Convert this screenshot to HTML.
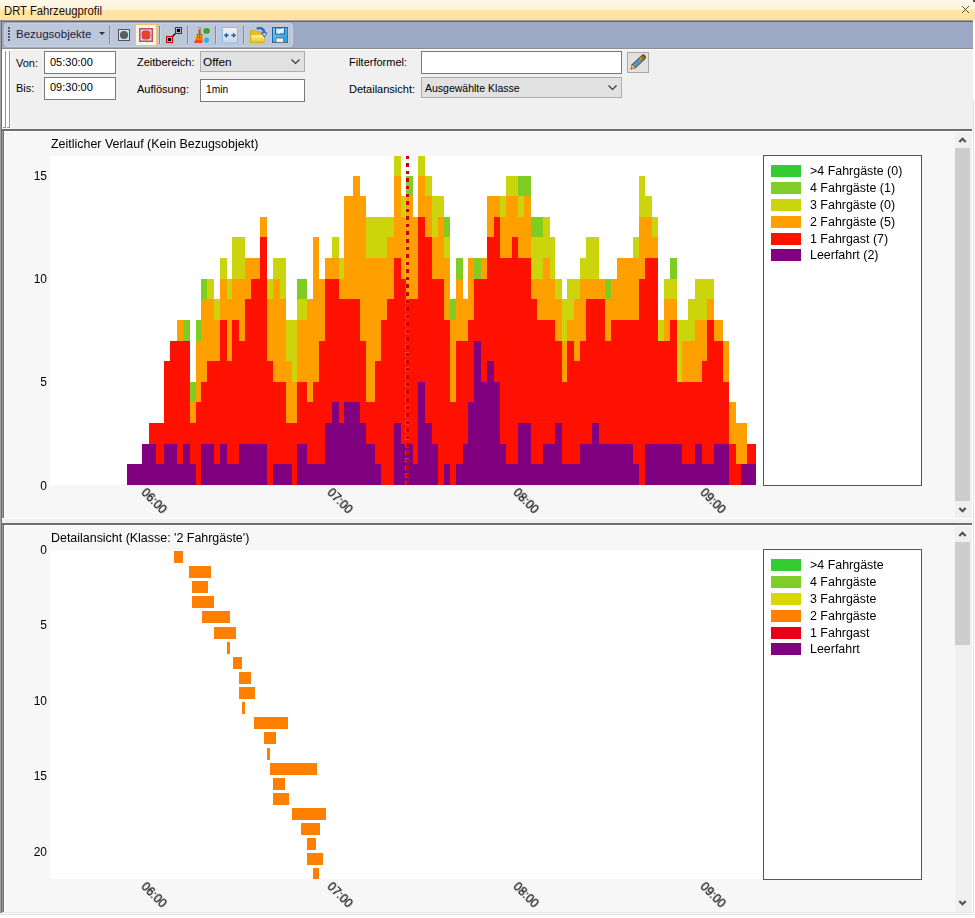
<!DOCTYPE html>
<html><head><meta charset="utf-8">
<style>
*{margin:0;padding:0;box-sizing:border-box}
html,body{width:975px;height:918px;overflow:hidden;background:#fff;font-family:"Liberation Sans",sans-serif;}
.a{position:absolute}
.t{position:absolute;white-space:nowrap;line-height:1}
#title{left:0;top:0;width:975px;height:20px;background:linear-gradient(#FFF9EA 0px,#FEF1D4 10px,#FFE6A2 10px,#FFE39C 20px)}
.lbl{position:absolute;white-space:nowrap;line-height:1;font-size:11px;color:#000}
.box{position:absolute;background:#fff;border:1px solid #7A7A7A}
.dd{position:absolute;background:#E1E1E1;border:1px solid #ADADAD}
.sep{position:absolute;top:26px;width:1px;height:18px;background:#7F8CA8;box-shadow:1px 0 0 #C9D2E2}
.ct{position:absolute;white-space:nowrap;line-height:1;font-size:12.45px;color:#000;will-change:transform}
.yl{position:absolute;white-space:nowrap;line-height:1;font-size:12px;color:#000;text-align:right;width:30px;will-change:transform}
.xl{position:absolute;white-space:nowrap;line-height:1;font-size:12px;color:#000;transform:rotate(45deg);transform-origin:center center;will-change:transform;-webkit-text-stroke:0.2px #000}
.lg{position:absolute;white-space:nowrap;line-height:1;font-size:12.45px;color:#000;will-change:transform}
</style></head><body>
<!-- title bar -->
<div id="title" class="a"></div>
<div class="t" style="left:4px;top:4.6px;font-size:12px;color:#1a0a0a;transform:scaleX(0.94);transform-origin:0 0">DRT Fahrzeugprofil</div>
<svg class="a" style="left:961px;top:5px" width="10" height="9" viewBox="0 0 10 9"><path d="M1 1L8 8M8 1L1 8" stroke="#4A3C22" stroke-width="0.9"/></svg>
<div class="a" style="left:973px;top:0;width:2px;height:2px;background:#555"></div>
<!-- dark line -->
<div class="a" style="left:0;top:20px;width:973px;height:1px;background:#A29C88"></div>
<div class="a" style="left:0;top:21px;width:973px;height:1px;background:#666666"></div>
<!-- toolbar strip -->
<div class="a" style="left:2px;top:22px;width:971px;height:26px;background:#9BA9C4"></div>
<div class="a" style="left:4px;top:23px;width:289px;height:24px;background:#BCC7D9;border:1px solid #C8D1E1;border-radius:3px"></div>
<div class="a" style="left:2px;top:48px;width:971px;height:1px;background:#8D8D8D"></div>
<div class="a" style="left:2px;top:49px;width:971px;height:1px;background:#FFFFFF"></div>
<!-- grip dots -->
<svg class="a" style="left:7px;top:26px" width="4" height="16"><rect x="1" y="1" width="2" height="2" fill="#4F5B73"/><rect x="1" y="4" width="2" height="2" fill="#4F5B73"/><rect x="1" y="7" width="2" height="2" fill="#4F5B73"/><rect x="1" y="10" width="2" height="2" fill="#4F5B73"/><rect x="1" y="13" width="2" height="2" fill="#4F5B73"/></svg>
<div class="t" style="left:16px;top:29px;font-size:11.5px;color:#1C1C44">Bezugsobjekte</div>
<svg class="a" style="left:99px;top:32px" width="6" height="4"><path d="M0 0H6L3 3Z" fill="#2A3350"/></svg>
<div class="sep" style="left:109px"></div>
<div class="sep" style="left:159px"></div>
<div class="sep" style="left:187px"></div>
<div class="sep" style="left:215px"></div>
<div class="sep" style="left:243px"></div>
<!-- icon 1: square with grey circle -->
<svg class="a" style="left:118px;top:29px" width="12" height="12"><rect x="0.5" y="0.5" width="11" height="11" fill="#BDE8F6" stroke="#555"/><circle cx="6" cy="6" r="4.1" fill="#5E5E5E"/></svg>
<!-- icon 2 highlighted -->
<div class="a" style="left:135px;top:24px;width:22px;height:22px;background:#FFF3D9;border:1px solid #EEC46A"></div>
<svg class="a" style="left:139px;top:28px" width="14" height="14"><rect x="0.75" y="0.75" width="12.5" height="12.5" fill="#B7E3F3" stroke="#CC4A6A" stroke-width="1.5"/><rect x="2.6" y="2.6" width="8.8" height="8.8" rx="3" fill="#E8412F"/></svg>
<!-- icon 3: line with squares -->
<svg class="a" style="left:166px;top:27px" width="17" height="17"><path d="M3.5 12.5L12.5 3.5" stroke="#111" stroke-width="1.4"/><rect x="0.5" y="9.5" width="6" height="6" fill="#BFD9EC" stroke="#D00000" stroke-width="1.1"/><rect x="1.7" y="10.7" width="3.6" height="3.6" rx="1.2" fill="#000"/><rect x="9.5" y="0.5" width="6" height="6" fill="#BFD9EC" stroke="#D00000" stroke-width="1.1"/><rect x="10.7" y="1.7" width="3.6" height="3.6" rx="1.2" fill="#000"/></svg>
<!-- icon 4: brush -->
<svg class="a" style="left:194px;top:27px" width="17" height="17"><defs><linearGradient id="brg" x1="0" y1="0" x2="0" y2="1"><stop offset="0" stop-color="#FFD000"/><stop offset="0.5" stop-color="#FF7A00"/><stop offset="1" stop-color="#FF1A00"/></linearGradient></defs><rect x="4.6" y="0.3" width="2" height="7.5" fill="#A5583A"/><circle cx="5.6" cy="1.6" r="0.7" fill="#fff"/><path d="M2.2 7.3H8.9L8.7 8.6H2.4Z" fill="#9C5030"/><path d="M2.6 8.6H9L8.3 15.8H0.2Z" fill="url(#brg)"/><path d="M3.6 8.6v2.6M5.4 8.6v2.6M7.2 8.6v2.6" stroke="#7A3A18" stroke-width="0.9"/><ellipse cx="12.6" cy="3.9" rx="3.3" ry="2.8" fill="#3DA52A"/><ellipse cx="12.5" cy="13.2" rx="2.4" ry="2.7" fill="#1EB8F2"/></svg>
<!-- icon 5: arrows -->
<svg class="a" style="left:222px;top:27px" width="16" height="17"><defs><linearGradient id="arg" x1="0" y1="0" x2="0" y2="1"><stop offset="0" stop-color="#F2F2F4"/><stop offset="1" stop-color="#C9D5EA"/></linearGradient></defs><rect x="0.5" y="0.5" width="15" height="15.5" fill="url(#arg)" stroke="#8CBDE6"/><path d="M1.8 8.3l3.2-2.6v5.2zM14.2 8.3l-3.2-2.6v5.2z" fill="#24609F"/><rect x="4" y="7.5" width="2.6" height="1.6" fill="#24609F"/><rect x="9.4" y="7.5" width="2.6" height="1.6" fill="#24609F"/></svg>
<!-- icon 6: folder -->
<svg class="a" style="left:250px;top:27px" width="18" height="17"><defs><linearGradient id="fog" x1="0" y1="0" x2="0" y2="1"><stop offset="0" stop-color="#FFF4B0"/><stop offset="1" stop-color="#EEC21A"/></linearGradient></defs><path d="M0.5 3.5h5l1.5 1.5h6v10.5H0.5z" fill="#E6BE2E" stroke="#CFA414" stroke-width="0.8"/><path d="M0.8 7.5h14.4l-1.2 8H0.8z" fill="url(#fog)" stroke="#D9AC12" stroke-width="0.8"/><path d="M6.8 1.8C10 0 14 1.2 14.3 6" stroke="#2C6CBC" stroke-width="2.4" fill="none"/><path d="M10.6 5.6L14.3 10.6L17.6 5.6Z" fill="#2C6CBC"/><path d="M12.6 6.4L14.3 8.8L15.9 6.4Z" fill="#FFFFFF"/></svg>
<!-- icon 7: save -->
<svg class="a" style="left:272px;top:27px" width="16" height="16"><defs><linearGradient id="svg7" x1="0" y1="0" x2="1" y2="1"><stop offset="0" stop-color="#6FD0F4"/><stop offset="1" stop-color="#2A98D6"/></linearGradient></defs><rect x="0.5" y="0.5" width="15" height="15" fill="url(#svg7)" stroke="#2064AC"/><path d="M15.5 1v14.5H1" stroke="#5A6A7A" fill="none"/><rect x="3.5" y="1" width="9" height="6" fill="#CFE5F4" stroke="#1F5FA8"/><path d="M6 6.5L11.5 1.5" stroke="#FFFFFF" stroke-width="1.2"/><rect x="4" y="11" width="7.5" height="4.5" fill="#EDEDED" stroke="#5A5A5A" stroke-width="0.7"/></svg>
<!-- form area -->
<div class="a" style="left:2px;top:50px;width:971px;height:79px;background:#F0F0F0"></div>
<div class="a" style="left:2px;top:50px;width:8px;height:79px;background:#FFFFFF"></div>
<div class="a" style="left:5px;top:51px;width:1px;height:77px;background:#959595"></div>
<div class="a" style="left:9px;top:51px;width:1px;height:77px;background:#959595"></div>
<div class="a" style="left:3px;top:127px;width:3px;height:1px;background:#959595"></div>
<div class="a" style="left:7px;top:127px;width:3px;height:1px;background:#959595"></div>
<div class="a" style="left:10px;top:50px;width:1px;height:79px;background:#F8F8F8"></div>
<div class="lbl" style="left:16px;top:58px">Von:</div>
<div class="box" style="left:44px;top:51px;width:72px;height:23px"></div>
<div class="lbl" style="left:50px;top:57px">05:30:00</div>
<div class="lbl" style="left:16px;top:83px">Bis:</div>
<div class="box" style="left:44px;top:77px;width:72px;height:23px"></div>
<div class="lbl" style="left:50px;top:82px">09:30:00</div>
<div class="lbl" style="left:137px;top:57px">Zeitbereich:</div>
<div class="dd" style="left:200px;top:51px;width:105px;height:21px"></div>
<div class="lbl" style="left:203px;top:57px;font-size:11.8px">Offen</div>
<svg class="a" style="left:291px;top:59px" width="10" height="6"><path d="M0.5 0.5L4.5 4.5L8.5 0.5" stroke="#333" fill="none" stroke-width="1.1"/></svg>
<div class="lbl" style="left:137px;top:84px">Auflösung:</div>
<div class="box" style="left:200px;top:79px;width:105px;height:23px"></div>
<div class="lbl" style="left:206px;top:85px;font-size:10.2px">1min</div>
<div class="lbl" style="left:349px;top:57px">Filterformel:</div>
<div class="box" style="left:421px;top:51px;width:201px;height:23px"></div>
<div class="dd" style="left:627px;top:52px;width:22px;height:21px;border-color:#A8A8A8"></div>
<svg class="a" style="left:626px;top:51px" width="24" height="23"><g transform="translate(4.3 18.5) rotate(-43.3) scale(0.94)"><path d="M0 0L5 -2.9H19.6Q21.7 -2.9 21.7 0Q21.7 2.9 19.6 2.9H5Z" fill="#7E3A1C"/><path d="M2 -0.9L5.3 -2V2L2 0.9Z" fill="#EFC24A"/><rect x="5.6" y="-1.9" width="9.4" height="3.8" fill="#3F9FDB"/><rect x="15" y="-1.9" width="2.2" height="3.8" fill="#F2A300"/><rect x="15" y="0.2" width="2.2" height="1.7" fill="#E0420E"/><rect x="17.2" y="-1.9" width="2.6" height="3.8" fill="#3D9A45"/></g></svg>
<div class="lbl" style="left:349px;top:84px">Detailansicht:</div>
<div class="dd" style="left:421px;top:77px;width:201px;height:21px"></div>
<div class="lbl" style="left:425px;top:83px;font-size:10.5px">Ausgewählte Klasse</div>
<svg class="a" style="left:608px;top:85px" width="10" height="6"><path d="M0.5 0.5L4.5 4.5L8.5 0.5" stroke="#333" fill="none" stroke-width="1.1"/></svg>
<!-- dark line under form -->
<div class="a" style="left:2px;top:129px;width:970px;height:2px;background:#6E6E6E"></div>
<!-- left outer border -->
<div class="a" style="left:0;top:20px;width:1px;height:895px;background:#A3A3A3"></div>
<div class="a" style="left:1px;top:20px;width:1px;height:895px;background:#6C6C6C"></div>
<!-- right outer -->
<div class="a" style="left:972px;top:131px;width:1px;height:784px;background:#FFFFFF"></div>
<div class="a" style="left:973px;top:100px;width:1px;height:815px;background:#E0E0E0"></div>

<!-- ===== top panel ===== -->
<div class="a" style="left:2px;top:131px;width:970px;height:387px;background:#F7F7F7"></div>
<div class="a" style="left:2px;top:131px;width:1px;height:387px;background:#9A9A9A"></div>
<div class="a" style="left:3px;top:131px;width:1px;height:387px;background:#6D6D6D"></div>
<div class="a" style="left:4px;top:131px;width:968px;height:1px;background:#FFFFFF"></div>
<div class="a" style="left:4px;top:131px;width:1px;height:387px;background:#FFFFFF"></div>
<div class="ct" style="left:51px;top:138px">Zeitlicher Verlauf (Kein Bezugsobjekt)</div>
<svg class="a" style="left:0;top:0" width="975" height="918" shape-rendering="crispEdges">
<rect x="50" y="156" width="713" height="329" fill="#FFFFFF"/>
<rect x="127" y="464.00" width="15" height="21.00" fill="#800080"/>
<rect x="142" y="444.00" width="7" height="41.00" fill="#800080"/>
<rect x="149" y="444.00" width="7" height="41.00" fill="#800080"/>
<rect x="149" y="423.00" width="7" height="21.00" fill="#FF1100"/>
<rect x="156" y="464.00" width="8" height="21.00" fill="#800080"/>
<rect x="156" y="423.00" width="8" height="41.00" fill="#FF1100"/>
<rect x="164" y="444.00" width="6" height="41.00" fill="#800080"/>
<rect x="164" y="361.00" width="6" height="83.00" fill="#FF1100"/>
<rect x="170" y="444.00" width="7" height="41.00" fill="#800080"/>
<rect x="170" y="341.00" width="7" height="103.00" fill="#FF1100"/>
<rect x="177" y="464.00" width="6" height="21.00" fill="#800080"/>
<rect x="177" y="341.00" width="6" height="123.00" fill="#FF1100"/>
<rect x="177" y="320.00" width="6" height="21.00" fill="#FFA000"/>
<rect x="183" y="444.00" width="7" height="41.00" fill="#800080"/>
<rect x="183" y="341.00" width="7" height="103.00" fill="#FF1100"/>
<rect x="183" y="320.00" width="7" height="21.00" fill="#7FCC22"/>
<rect x="190" y="464.00" width="6" height="21.00" fill="#800080"/>
<rect x="190" y="423.00" width="6" height="41.00" fill="#FF1100"/>
<rect x="190" y="402.00" width="6" height="21.00" fill="#FFA000"/>
<rect x="190" y="382.00" width="6" height="20.00" fill="#7FCC22"/>
<rect x="196" y="402.00" width="5" height="83.00" fill="#FF1100"/>
<rect x="196" y="341.00" width="5" height="61.00" fill="#FFA000"/>
<rect x="196" y="320.00" width="5" height="21.00" fill="#7FCC22"/>
<rect x="201" y="444.00" width="6" height="41.00" fill="#800080"/>
<rect x="201" y="382.00" width="6" height="62.00" fill="#FF1100"/>
<rect x="201" y="299.00" width="6" height="83.00" fill="#FFA000"/>
<rect x="201" y="279.00" width="6" height="20.00" fill="#7FCC22"/>
<rect x="207" y="444.00" width="7" height="41.00" fill="#800080"/>
<rect x="207" y="361.00" width="7" height="83.00" fill="#FF1100"/>
<rect x="207" y="299.00" width="7" height="62.00" fill="#FFA000"/>
<rect x="207" y="279.00" width="7" height="20.00" fill="#CCD40C"/>
<rect x="214" y="464.00" width="6" height="21.00" fill="#800080"/>
<rect x="214" y="361.00" width="6" height="103.00" fill="#FF1100"/>
<rect x="214" y="320.00" width="6" height="41.00" fill="#FFA000"/>
<rect x="214" y="299.00" width="6" height="21.00" fill="#CCD40C"/>
<rect x="220" y="444.00" width="7" height="41.00" fill="#800080"/>
<rect x="220" y="320.00" width="7" height="124.00" fill="#FF1100"/>
<rect x="220" y="279.00" width="7" height="41.00" fill="#FFA000"/>
<rect x="220" y="258.00" width="7" height="21.00" fill="#CCD40C"/>
<rect x="227" y="464.00" width="5" height="21.00" fill="#800080"/>
<rect x="227" y="361.00" width="5" height="103.00" fill="#FF1100"/>
<rect x="227" y="299.00" width="5" height="62.00" fill="#FFA000"/>
<rect x="227" y="279.00" width="5" height="20.00" fill="#CCD40C"/>
<rect x="232" y="464.00" width="7" height="21.00" fill="#800080"/>
<rect x="232" y="320.00" width="7" height="144.00" fill="#FF1100"/>
<rect x="232" y="279.00" width="7" height="41.00" fill="#FFA000"/>
<rect x="232" y="237.00" width="7" height="42.00" fill="#CCD40C"/>
<rect x="239" y="444.00" width="6" height="41.00" fill="#800080"/>
<rect x="239" y="341.00" width="6" height="103.00" fill="#FF1100"/>
<rect x="239" y="279.00" width="6" height="62.00" fill="#FFA000"/>
<rect x="239" y="237.00" width="6" height="42.00" fill="#CCD40C"/>
<rect x="245" y="444.00" width="6" height="41.00" fill="#800080"/>
<rect x="245" y="299.00" width="6" height="145.00" fill="#FF1100"/>
<rect x="245" y="258.00" width="6" height="41.00" fill="#FFA000"/>
<rect x="251" y="444.00" width="9" height="41.00" fill="#800080"/>
<rect x="251" y="279.00" width="9" height="165.00" fill="#FF1100"/>
<rect x="251" y="258.00" width="9" height="21.00" fill="#FFA000"/>
<rect x="260" y="444.00" width="7" height="41.00" fill="#800080"/>
<rect x="260" y="237.00" width="7" height="207.00" fill="#FF1100"/>
<rect x="260" y="217.00" width="7" height="20.00" fill="#FFA000"/>
<rect x="267" y="361.00" width="6" height="124.00" fill="#FF1100"/>
<rect x="267" y="299.00" width="6" height="62.00" fill="#FFA000"/>
<rect x="267" y="279.00" width="6" height="20.00" fill="#CCD40C"/>
<rect x="273" y="464.00" width="7" height="21.00" fill="#800080"/>
<rect x="273" y="382.00" width="7" height="82.00" fill="#FF1100"/>
<rect x="273" y="279.00" width="7" height="103.00" fill="#FFA000"/>
<rect x="273" y="258.00" width="7" height="21.00" fill="#CCD40C"/>
<rect x="280" y="464.00" width="6" height="21.00" fill="#800080"/>
<rect x="280" y="382.00" width="6" height="82.00" fill="#FF1100"/>
<rect x="280" y="299.00" width="6" height="83.00" fill="#FFA000"/>
<rect x="280" y="258.00" width="6" height="41.00" fill="#CCD40C"/>
<rect x="286" y="464.00" width="6" height="21.00" fill="#800080"/>
<rect x="286" y="423.00" width="6" height="41.00" fill="#FF1100"/>
<rect x="286" y="361.00" width="6" height="62.00" fill="#FFA000"/>
<rect x="286" y="320.00" width="6" height="41.00" fill="#CCD40C"/>
<rect x="292" y="423.00" width="5" height="62.00" fill="#FF1100"/>
<rect x="292" y="382.00" width="5" height="41.00" fill="#FFA000"/>
<rect x="292" y="320.00" width="5" height="62.00" fill="#CCD40C"/>
<rect x="297" y="444.00" width="10" height="41.00" fill="#800080"/>
<rect x="297" y="382.00" width="10" height="62.00" fill="#FF1100"/>
<rect x="297" y="320.00" width="10" height="62.00" fill="#FFA000"/>
<rect x="297" y="299.00" width="10" height="21.00" fill="#CCD40C"/>
<rect x="297" y="279.00" width="10" height="20.00" fill="#7FCC22"/>
<rect x="307" y="464.00" width="6" height="21.00" fill="#800080"/>
<rect x="307" y="402.00" width="6" height="62.00" fill="#FF1100"/>
<rect x="307" y="299.00" width="6" height="103.00" fill="#FFA000"/>
<rect x="313" y="464.00" width="6" height="21.00" fill="#800080"/>
<rect x="313" y="382.00" width="6" height="82.00" fill="#FF1100"/>
<rect x="313" y="237.00" width="6" height="145.00" fill="#FFA000"/>
<rect x="319" y="464.00" width="6" height="21.00" fill="#800080"/>
<rect x="319" y="341.00" width="6" height="123.00" fill="#FF1100"/>
<rect x="319" y="279.00" width="6" height="62.00" fill="#FFA000"/>
<rect x="325" y="423.00" width="7" height="62.00" fill="#800080"/>
<rect x="325" y="279.00" width="7" height="144.00" fill="#FF1100"/>
<rect x="325" y="258.00" width="7" height="21.00" fill="#FFA000"/>
<rect x="332" y="402.00" width="7" height="83.00" fill="#800080"/>
<rect x="332" y="279.00" width="7" height="123.00" fill="#FF1100"/>
<rect x="332" y="258.00" width="7" height="21.00" fill="#FFA000"/>
<rect x="332" y="237.00" width="7" height="21.00" fill="#CCD40C"/>
<rect x="339" y="423.00" width="5" height="62.00" fill="#800080"/>
<rect x="339" y="299.00" width="5" height="124.00" fill="#FF1100"/>
<rect x="339" y="279.00" width="5" height="20.00" fill="#FFA000"/>
<rect x="339" y="258.00" width="5" height="21.00" fill="#CCD40C"/>
<rect x="344" y="402.00" width="9" height="83.00" fill="#800080"/>
<rect x="344" y="299.00" width="9" height="103.00" fill="#FF1100"/>
<rect x="344" y="196.00" width="9" height="103.00" fill="#FFA000"/>
<rect x="353" y="402.00" width="7" height="83.00" fill="#800080"/>
<rect x="353" y="299.00" width="7" height="103.00" fill="#FF1100"/>
<rect x="353" y="176.00" width="7" height="123.00" fill="#FFA000"/>
<rect x="360" y="423.00" width="6" height="62.00" fill="#800080"/>
<rect x="360" y="341.00" width="6" height="82.00" fill="#FF1100"/>
<rect x="360" y="196.00" width="6" height="145.00" fill="#FFA000"/>
<rect x="366" y="444.00" width="9" height="41.00" fill="#800080"/>
<rect x="366" y="402.00" width="9" height="42.00" fill="#FF1100"/>
<rect x="366" y="258.00" width="9" height="144.00" fill="#FFA000"/>
<rect x="366" y="217.00" width="9" height="41.00" fill="#CCD40C"/>
<rect x="375" y="464.00" width="6" height="21.00" fill="#800080"/>
<rect x="375" y="361.00" width="6" height="103.00" fill="#FF1100"/>
<rect x="375" y="258.00" width="6" height="103.00" fill="#FFA000"/>
<rect x="375" y="217.00" width="6" height="41.00" fill="#CCD40C"/>
<rect x="381" y="320.00" width="6" height="165.00" fill="#FF1100"/>
<rect x="381" y="258.00" width="6" height="62.00" fill="#FFA000"/>
<rect x="381" y="217.00" width="6" height="41.00" fill="#CCD40C"/>
<rect x="387" y="299.00" width="7" height="186.00" fill="#FF1100"/>
<rect x="387" y="237.00" width="7" height="62.00" fill="#FFA000"/>
<rect x="387" y="217.00" width="7" height="20.00" fill="#CCD40C"/>
<rect x="394" y="423.00" width="7" height="62.00" fill="#800080"/>
<rect x="394" y="258.00" width="7" height="165.00" fill="#FF1100"/>
<rect x="394" y="176.00" width="7" height="82.00" fill="#FFA000"/>
<rect x="394" y="156.00" width="7" height="20.00" fill="#CCD40C"/>
<rect x="401" y="444.00" width="5" height="41.00" fill="#800080"/>
<rect x="401" y="279.00" width="5" height="165.00" fill="#FF1100"/>
<rect x="401" y="217.00" width="5" height="62.00" fill="#FFA000"/>
<rect x="401" y="196.00" width="5" height="21.00" fill="#CCD40C"/>
<rect x="406" y="444.00" width="7" height="41.00" fill="#800080"/>
<rect x="406" y="299.00" width="7" height="145.00" fill="#FF1100"/>
<rect x="406" y="196.00" width="7" height="103.00" fill="#FFA000"/>
<rect x="406" y="176.00" width="7" height="20.00" fill="#7FCC22"/>
<rect x="413" y="464.00" width="5" height="21.00" fill="#800080"/>
<rect x="413" y="299.00" width="5" height="165.00" fill="#FF1100"/>
<rect x="413" y="217.00" width="5" height="82.00" fill="#FFA000"/>
<rect x="418" y="382.00" width="7" height="103.00" fill="#800080"/>
<rect x="418" y="217.00" width="7" height="165.00" fill="#FF1100"/>
<rect x="418" y="176.00" width="7" height="41.00" fill="#FFA000"/>
<rect x="418" y="156.00" width="7" height="20.00" fill="#CCD40C"/>
<rect x="425" y="423.00" width="7" height="62.00" fill="#800080"/>
<rect x="425" y="237.00" width="7" height="186.00" fill="#FF1100"/>
<rect x="425" y="196.00" width="7" height="41.00" fill="#FFA000"/>
<rect x="425" y="176.00" width="7" height="20.00" fill="#CCD40C"/>
<rect x="432" y="444.00" width="6" height="41.00" fill="#800080"/>
<rect x="432" y="279.00" width="6" height="165.00" fill="#FF1100"/>
<rect x="432" y="237.00" width="6" height="42.00" fill="#FFA000"/>
<rect x="432" y="196.00" width="6" height="41.00" fill="#CCD40C"/>
<rect x="438" y="279.00" width="6" height="206.00" fill="#FF1100"/>
<rect x="438" y="217.00" width="6" height="62.00" fill="#FFA000"/>
<rect x="438" y="196.00" width="6" height="21.00" fill="#CCD40C"/>
<rect x="444" y="464.00" width="6" height="21.00" fill="#800080"/>
<rect x="444" y="320.00" width="6" height="144.00" fill="#FF1100"/>
<rect x="444" y="258.00" width="6" height="62.00" fill="#FFA000"/>
<rect x="444" y="237.00" width="6" height="21.00" fill="#CCD40C"/>
<rect x="444" y="217.00" width="6" height="20.00" fill="#7FCC22"/>
<rect x="450" y="402.00" width="6" height="83.00" fill="#FF1100"/>
<rect x="450" y="320.00" width="6" height="82.00" fill="#FFA000"/>
<rect x="450" y="299.00" width="6" height="21.00" fill="#7FCC22"/>
<rect x="456" y="464.00" width="7" height="21.00" fill="#800080"/>
<rect x="456" y="341.00" width="7" height="123.00" fill="#FF1100"/>
<rect x="456" y="279.00" width="7" height="62.00" fill="#FFA000"/>
<rect x="456" y="258.00" width="7" height="21.00" fill="#7FCC22"/>
<rect x="463" y="444.00" width="5" height="41.00" fill="#800080"/>
<rect x="463" y="341.00" width="5" height="103.00" fill="#FF1100"/>
<rect x="463" y="299.00" width="5" height="42.00" fill="#FFA000"/>
<rect x="468" y="402.00" width="6" height="83.00" fill="#800080"/>
<rect x="468" y="320.00" width="6" height="82.00" fill="#FF1100"/>
<rect x="468" y="258.00" width="6" height="62.00" fill="#FFA000"/>
<rect x="474" y="341.00" width="7" height="144.00" fill="#800080"/>
<rect x="474" y="279.00" width="7" height="62.00" fill="#FF1100"/>
<rect x="474" y="258.00" width="7" height="21.00" fill="#7FCC22"/>
<rect x="481" y="382.00" width="6" height="103.00" fill="#800080"/>
<rect x="481" y="279.00" width="6" height="103.00" fill="#FF1100"/>
<rect x="481" y="258.00" width="6" height="21.00" fill="#FFA000"/>
<rect x="487" y="361.00" width="7" height="124.00" fill="#800080"/>
<rect x="487" y="237.00" width="7" height="124.00" fill="#FF1100"/>
<rect x="487" y="196.00" width="7" height="41.00" fill="#FFA000"/>
<rect x="494" y="382.00" width="6" height="103.00" fill="#800080"/>
<rect x="494" y="217.00" width="6" height="165.00" fill="#FF1100"/>
<rect x="494" y="196.00" width="6" height="21.00" fill="#FFA000"/>
<rect x="500" y="444.00" width="6" height="41.00" fill="#800080"/>
<rect x="500" y="258.00" width="6" height="186.00" fill="#FF1100"/>
<rect x="500" y="217.00" width="6" height="41.00" fill="#FFA000"/>
<rect x="500" y="196.00" width="6" height="21.00" fill="#CCD40C"/>
<rect x="506" y="464.00" width="6" height="21.00" fill="#800080"/>
<rect x="506" y="258.00" width="6" height="206.00" fill="#FF1100"/>
<rect x="506" y="196.00" width="6" height="62.00" fill="#FFA000"/>
<rect x="506" y="176.00" width="6" height="20.00" fill="#CCD40C"/>
<rect x="512" y="464.00" width="6" height="21.00" fill="#800080"/>
<rect x="512" y="237.00" width="6" height="227.00" fill="#FF1100"/>
<rect x="512" y="196.00" width="6" height="41.00" fill="#FFA000"/>
<rect x="512" y="176.00" width="6" height="20.00" fill="#CCD40C"/>
<rect x="518" y="423.00" width="6" height="62.00" fill="#800080"/>
<rect x="518" y="258.00" width="6" height="165.00" fill="#FF1100"/>
<rect x="518" y="217.00" width="6" height="41.00" fill="#FFA000"/>
<rect x="518" y="196.00" width="6" height="21.00" fill="#CCD40C"/>
<rect x="518" y="176.00" width="6" height="20.00" fill="#7FCC22"/>
<rect x="524" y="423.00" width="7" height="62.00" fill="#800080"/>
<rect x="524" y="258.00" width="7" height="165.00" fill="#FF1100"/>
<rect x="524" y="196.00" width="7" height="62.00" fill="#FFA000"/>
<rect x="524" y="176.00" width="7" height="20.00" fill="#7FCC22"/>
<rect x="531" y="464.00" width="6" height="21.00" fill="#800080"/>
<rect x="531" y="299.00" width="6" height="165.00" fill="#FF1100"/>
<rect x="531" y="279.00" width="6" height="20.00" fill="#FFA000"/>
<rect x="531" y="237.00" width="6" height="42.00" fill="#CCD40C"/>
<rect x="531" y="217.00" width="6" height="20.00" fill="#7FCC22"/>
<rect x="537" y="464.00" width="6" height="21.00" fill="#800080"/>
<rect x="537" y="320.00" width="6" height="144.00" fill="#FF1100"/>
<rect x="537" y="279.00" width="6" height="41.00" fill="#FFA000"/>
<rect x="537" y="237.00" width="6" height="42.00" fill="#CCD40C"/>
<rect x="537" y="217.00" width="6" height="20.00" fill="#7FCC22"/>
<rect x="543" y="444.00" width="7" height="41.00" fill="#800080"/>
<rect x="543" y="320.00" width="7" height="124.00" fill="#FF1100"/>
<rect x="543" y="258.00" width="7" height="62.00" fill="#FFA000"/>
<rect x="543" y="217.00" width="7" height="41.00" fill="#CCD40C"/>
<rect x="550" y="444.00" width="5" height="41.00" fill="#800080"/>
<rect x="550" y="320.00" width="5" height="124.00" fill="#FF1100"/>
<rect x="550" y="279.00" width="5" height="41.00" fill="#FFA000"/>
<rect x="550" y="237.00" width="5" height="42.00" fill="#CCD40C"/>
<rect x="555" y="423.00" width="7" height="62.00" fill="#800080"/>
<rect x="555" y="341.00" width="7" height="82.00" fill="#FF1100"/>
<rect x="555" y="299.00" width="7" height="42.00" fill="#FFA000"/>
<rect x="555" y="279.00" width="7" height="20.00" fill="#CCD40C"/>
<rect x="562" y="464.00" width="5" height="21.00" fill="#800080"/>
<rect x="562" y="382.00" width="5" height="82.00" fill="#FF1100"/>
<rect x="562" y="341.00" width="5" height="41.00" fill="#FFA000"/>
<rect x="562" y="299.00" width="5" height="42.00" fill="#CCD40C"/>
<rect x="567" y="464.00" width="7" height="21.00" fill="#800080"/>
<rect x="567" y="341.00" width="7" height="123.00" fill="#FF1100"/>
<rect x="567" y="320.00" width="7" height="21.00" fill="#FFA000"/>
<rect x="567" y="279.00" width="7" height="41.00" fill="#CCD40C"/>
<rect x="574" y="464.00" width="6" height="21.00" fill="#800080"/>
<rect x="574" y="361.00" width="6" height="103.00" fill="#FF1100"/>
<rect x="574" y="299.00" width="6" height="62.00" fill="#FFA000"/>
<rect x="574" y="279.00" width="6" height="20.00" fill="#CCD40C"/>
<rect x="580" y="444.00" width="6" height="41.00" fill="#800080"/>
<rect x="580" y="341.00" width="6" height="103.00" fill="#FF1100"/>
<rect x="580" y="279.00" width="6" height="62.00" fill="#FFA000"/>
<rect x="580" y="258.00" width="6" height="21.00" fill="#CCD40C"/>
<rect x="586" y="444.00" width="6" height="41.00" fill="#800080"/>
<rect x="586" y="299.00" width="6" height="145.00" fill="#FF1100"/>
<rect x="586" y="279.00" width="6" height="20.00" fill="#FFA000"/>
<rect x="586" y="237.00" width="6" height="42.00" fill="#CCD40C"/>
<rect x="592" y="423.00" width="7" height="62.00" fill="#800080"/>
<rect x="592" y="299.00" width="7" height="124.00" fill="#FF1100"/>
<rect x="592" y="279.00" width="7" height="20.00" fill="#FFA000"/>
<rect x="592" y="237.00" width="7" height="42.00" fill="#CCD40C"/>
<rect x="599" y="444.00" width="6" height="41.00" fill="#800080"/>
<rect x="599" y="299.00" width="6" height="145.00" fill="#FF1100"/>
<rect x="599" y="279.00" width="6" height="20.00" fill="#FFA000"/>
<rect x="605" y="444.00" width="6" height="41.00" fill="#800080"/>
<rect x="605" y="341.00" width="6" height="103.00" fill="#FF1100"/>
<rect x="605" y="299.00" width="6" height="42.00" fill="#FFA000"/>
<rect x="605" y="279.00" width="6" height="20.00" fill="#7FCC22"/>
<rect x="611" y="444.00" width="6" height="41.00" fill="#800080"/>
<rect x="611" y="320.00" width="6" height="124.00" fill="#FF1100"/>
<rect x="611" y="279.00" width="6" height="41.00" fill="#FFA000"/>
<rect x="617" y="444.00" width="16" height="41.00" fill="#800080"/>
<rect x="617" y="320.00" width="16" height="124.00" fill="#FF1100"/>
<rect x="617" y="258.00" width="16" height="62.00" fill="#FFA000"/>
<rect x="633" y="464.00" width="6" height="21.00" fill="#800080"/>
<rect x="633" y="320.00" width="6" height="144.00" fill="#FF1100"/>
<rect x="633" y="258.00" width="6" height="62.00" fill="#FFA000"/>
<rect x="633" y="237.00" width="6" height="21.00" fill="#CCD40C"/>
<rect x="639" y="279.00" width="6" height="206.00" fill="#FF1100"/>
<rect x="639" y="217.00" width="6" height="62.00" fill="#FFA000"/>
<rect x="639" y="176.00" width="6" height="41.00" fill="#CCD40C"/>
<rect x="645" y="444.00" width="7" height="41.00" fill="#800080"/>
<rect x="645" y="258.00" width="7" height="186.00" fill="#FF1100"/>
<rect x="645" y="217.00" width="7" height="41.00" fill="#FFA000"/>
<rect x="645" y="196.00" width="7" height="21.00" fill="#CCD40C"/>
<rect x="652" y="444.00" width="6" height="41.00" fill="#800080"/>
<rect x="652" y="258.00" width="6" height="186.00" fill="#FF1100"/>
<rect x="652" y="237.00" width="6" height="21.00" fill="#FFA000"/>
<rect x="652" y="217.00" width="6" height="20.00" fill="#CCD40C"/>
<rect x="658" y="444.00" width="6" height="41.00" fill="#800080"/>
<rect x="658" y="341.00" width="6" height="103.00" fill="#FF1100"/>
<rect x="658" y="320.00" width="6" height="21.00" fill="#CCD40C"/>
<rect x="664" y="444.00" width="6" height="41.00" fill="#800080"/>
<rect x="664" y="341.00" width="6" height="103.00" fill="#FF1100"/>
<rect x="664" y="299.00" width="6" height="42.00" fill="#FFA000"/>
<rect x="664" y="279.00" width="6" height="20.00" fill="#CCD40C"/>
<rect x="670" y="444.00" width="7" height="41.00" fill="#800080"/>
<rect x="670" y="320.00" width="7" height="124.00" fill="#FF1100"/>
<rect x="670" y="299.00" width="7" height="21.00" fill="#FFA000"/>
<rect x="670" y="279.00" width="7" height="20.00" fill="#CCD40C"/>
<rect x="670" y="258.00" width="7" height="21.00" fill="#7FCC22"/>
<rect x="677" y="444.00" width="5" height="41.00" fill="#800080"/>
<rect x="677" y="382.00" width="5" height="62.00" fill="#FF1100"/>
<rect x="677" y="320.00" width="5" height="62.00" fill="#CCD40C"/>
<rect x="682" y="464.00" width="6" height="21.00" fill="#800080"/>
<rect x="682" y="382.00" width="6" height="82.00" fill="#FF1100"/>
<rect x="682" y="341.00" width="6" height="41.00" fill="#FFA000"/>
<rect x="682" y="320.00" width="6" height="21.00" fill="#CCD40C"/>
<rect x="688" y="464.00" width="7" height="21.00" fill="#800080"/>
<rect x="688" y="382.00" width="7" height="82.00" fill="#FF1100"/>
<rect x="688" y="341.00" width="7" height="41.00" fill="#FFA000"/>
<rect x="688" y="299.00" width="7" height="42.00" fill="#CCD40C"/>
<rect x="695" y="444.00" width="7" height="41.00" fill="#800080"/>
<rect x="695" y="382.00" width="7" height="62.00" fill="#FF1100"/>
<rect x="695" y="320.00" width="7" height="62.00" fill="#FFA000"/>
<rect x="695" y="279.00" width="7" height="41.00" fill="#CCD40C"/>
<rect x="702" y="464.00" width="5" height="21.00" fill="#800080"/>
<rect x="702" y="361.00" width="5" height="103.00" fill="#FF1100"/>
<rect x="702" y="320.00" width="5" height="41.00" fill="#FFA000"/>
<rect x="702" y="279.00" width="5" height="41.00" fill="#CCD40C"/>
<rect x="707" y="464.00" width="7" height="21.00" fill="#800080"/>
<rect x="707" y="320.00" width="7" height="144.00" fill="#FF1100"/>
<rect x="707" y="299.00" width="7" height="21.00" fill="#FFA000"/>
<rect x="707" y="279.00" width="7" height="20.00" fill="#CCD40C"/>
<rect x="714" y="444.00" width="9" height="41.00" fill="#800080"/>
<rect x="714" y="341.00" width="9" height="103.00" fill="#FF1100"/>
<rect x="714" y="320.00" width="9" height="21.00" fill="#FFA000"/>
<rect x="723" y="444.00" width="6" height="41.00" fill="#800080"/>
<rect x="723" y="382.00" width="6" height="62.00" fill="#FF1100"/>
<rect x="723" y="341.00" width="6" height="41.00" fill="#FFA000"/>
<rect x="729" y="444.00" width="7" height="41.00" fill="#FF1100"/>
<rect x="729" y="402.00" width="7" height="42.00" fill="#FFA000"/>
<rect x="736" y="464.00" width="5" height="21.00" fill="#FF1100"/>
<rect x="736" y="423.00" width="5" height="41.00" fill="#FFA000"/>
<rect x="741" y="464.00" width="6" height="21.00" fill="#800080"/>
<rect x="741" y="423.00" width="6" height="41.00" fill="#FFA000"/>
<rect x="747" y="464.00" width="9" height="21.00" fill="#800080"/>
<rect x="747" y="444.00" width="9" height="20.00" fill="#FF1100"/>
<line x1="407" y1="155.2" x2="407" y2="485" stroke="rgba(255,255,255,0.22)" stroke-width="4" stroke-dasharray="4.5 3.073" shape-rendering="auto"/>
<line x1="407.5" y1="155.7" x2="407.5" y2="485" stroke="#C80000" stroke-width="3" stroke-dasharray="3.5 4.073"/>
<rect x="763.5" y="155.5" width="158" height="330" fill="#FFFFFF" stroke="#555555" stroke-width="1"/>
<rect x="771" y="165" width="30" height="12" fill="#33CC33"/>
<rect x="771" y="182" width="30" height="12" fill="#80CC28"/>
<rect x="771" y="199" width="30" height="12" fill="#CCD40C"/>
<rect x="771" y="216" width="30" height="12" fill="#FFA000"/>
<rect x="771" y="233" width="30" height="12" fill="#FF1100"/>
<rect x="771" y="249" width="30" height="12" fill="#800080"/>
</svg>
<div class="lg" style="left:810px;top:165px">&gt;4 Fahrgäste (0)</div>
<div class="lg" style="left:810px;top:182px">4 Fahrgäste (1)</div>
<div class="lg" style="left:810px;top:199px">3 Fahrgäste (0)</div>
<div class="lg" style="left:810px;top:216px">2 Fahrgäste (5)</div>
<div class="lg" style="left:810px;top:233px">1 Fahrgast (7)</div>
<div class="lg" style="left:810px;top:249px">Leerfahrt (2)</div>
<div class="yl" style="left:17px;top:170px">15</div>
<div class="yl" style="left:17px;top:273px">10</div>
<div class="yl" style="left:17px;top:376px">5</div>
<div class="yl" style="left:17px;top:480px">0</div>
<div class="xl" style="left:139px;top:495px">06:00</div>
<div class="xl" style="left:325px;top:495px">07:00</div>
<div class="xl" style="left:511px;top:495px">08:00</div>
<div class="xl" style="left:698px;top:495px">09:00</div>
<!-- scrollbar top -->
<div class="a" style="left:955px;top:132px;width:17px;height:386px;background:#F0F0F0"></div>
<div class="a" style="left:955px;top:148px;width:15px;height:353px;background:#CDCDCD"></div>
<svg class="a" style="left:958px;top:136px" width="9" height="8"><path d="M1.3 6L4.5 2.8L7.7 6" stroke="#555" stroke-width="2.3" fill="none"/></svg>
<svg class="a" style="left:958px;top:506px" width="9" height="8"><path d="M1.3 2L4.5 5.2L7.7 2" stroke="#555" stroke-width="2.3" fill="none"/></svg>

<!-- ===== splitter ===== -->
<div class="a" style="left:2px;top:518px;width:970px;height:1px;background:#FFFFFF"></div>
<div class="a" style="left:2px;top:519px;width:970px;height:4px;background:#EFEFEF"></div>
<div class="a" style="left:2px;top:523px;width:970px;height:2px;background:#6D6D6D"></div>

<!-- ===== bottom panel ===== -->
<div class="a" style="left:2px;top:525px;width:970px;height:387px;background:#F7F7F7"></div>
<div class="a" style="left:2px;top:525px;width:1px;height:388px;background:#9A9A9A"></div>
<div class="a" style="left:3px;top:525px;width:1px;height:388px;background:#6D6D6D"></div>
<div class="a" style="left:4px;top:525px;width:968px;height:1px;background:#FFFFFF"></div>
<div class="a" style="left:4px;top:525px;width:1px;height:387px;background:#FFFFFF"></div>
<div class="ct" style="left:51px;top:532px">Detailansicht (Klasse: '2 Fahrgäste')</div>
<svg class="a" style="left:0;top:0" width="975" height="918" shape-rendering="crispEdges">
<rect x="50" y="550" width="713" height="329" fill="#FFFFFF"/>
<rect x="174" y="551.00" width="9" height="12.00" fill="#FF8000"/>
<rect x="189" y="566.00" width="22" height="12.00" fill="#FF8000"/>
<rect x="192" y="581.00" width="16" height="12.00" fill="#FF8000"/>
<rect x="192" y="596.00" width="22" height="12.00" fill="#FF8000"/>
<rect x="202" y="611.00" width="28" height="12.00" fill="#FF8000"/>
<rect x="214" y="627.00" width="22" height="12.00" fill="#FF8000"/>
<rect x="227" y="642.00" width="3" height="12.00" fill="#FF8000"/>
<rect x="233" y="657.00" width="9" height="12.00" fill="#FF8000"/>
<rect x="239" y="672.00" width="12" height="12.00" fill="#FF8000"/>
<rect x="239" y="687.00" width="16" height="12.00" fill="#FF8000"/>
<rect x="242" y="702.00" width="3" height="12.00" fill="#FF8000"/>
<rect x="254" y="717.00" width="34" height="12.00" fill="#FF8000"/>
<rect x="264" y="732.00" width="12" height="12.00" fill="#FF8000"/>
<rect x="267" y="748.00" width="3" height="12.00" fill="#FF8000"/>
<rect x="270" y="763.00" width="47" height="12.00" fill="#FF8000"/>
<rect x="273" y="778.00" width="12" height="12.00" fill="#FF8000"/>
<rect x="273" y="793.00" width="16" height="12.00" fill="#FF8000"/>
<rect x="292" y="808.00" width="34" height="12.00" fill="#FF8000"/>
<rect x="301" y="823.00" width="19" height="12.00" fill="#FF8000"/>
<rect x="307" y="838.00" width="9" height="12.00" fill="#FF8000"/>
<rect x="307" y="853.00" width="16" height="12.00" fill="#FF8000"/>
<rect x="313" y="868.00" width="6" height="11.00" fill="#FF8000"/>
<rect x="763.5" y="549.5" width="158" height="330" fill="#FFFFFF" stroke="#555555" stroke-width="1"/>
<rect x="771" y="559" width="30" height="12" fill="#33CC33"/>
<rect x="771" y="576" width="30" height="12" fill="#80CC28"/>
<rect x="771" y="593" width="30" height="12" fill="#D8D800"/>
<rect x="771" y="610" width="30" height="12" fill="#FF8000"/>
<rect x="771" y="627" width="30" height="12" fill="#E80018"/>
<rect x="771" y="643" width="30" height="12" fill="#800080"/>
</svg>
<div class="lg" style="left:810px;top:559px">&gt;4 Fahrgäste</div>
<div class="lg" style="left:810px;top:576px">4 Fahrgäste</div>
<div class="lg" style="left:810px;top:593px">3 Fahrgäste</div>
<div class="lg" style="left:810px;top:610px">2 Fahrgäste</div>
<div class="lg" style="left:810px;top:627px">1 Fahrgast</div>
<div class="lg" style="left:810px;top:643px">Leerfahrt</div>
<div class="yl" style="left:17px;top:544px">0</div>
<div class="yl" style="left:17px;top:619px">5</div>
<div class="yl" style="left:17px;top:695px">10</div>
<div class="yl" style="left:17px;top:770px">15</div>
<div class="yl" style="left:17px;top:846px">20</div>
<div class="xl" style="left:139px;top:889px">06:00</div>
<div class="xl" style="left:325px;top:889px">07:00</div>
<div class="xl" style="left:511px;top:889px">08:00</div>
<div class="xl" style="left:698px;top:889px">09:00</div>
<!-- scrollbar bottom -->
<div class="a" style="left:955px;top:526px;width:17px;height:386px;background:#F0F0F0"></div>
<div class="a" style="left:955px;top:542px;width:15px;height:103px;background:#CDCDCD"></div>
<svg class="a" style="left:958px;top:530px" width="9" height="8"><path d="M1.3 6L4.5 2.8L7.7 6" stroke="#555" stroke-width="2.3" fill="none"/></svg>
<svg class="a" style="left:958px;top:899px" width="9" height="8"><path d="M1.3 2L4.5 5.2L7.7 2" stroke="#555" stroke-width="2.3" fill="none"/></svg>
<!-- bottom border -->
<div class="a" style="left:2px;top:912px;width:971px;height:1px;background:#E6E6E6"></div>
<div class="a" style="left:0;top:913px;width:974px;height:1px;background:#FFFFFF"></div>
<div class="a" style="left:0;top:914px;width:974px;height:1px;background:#DEDEDE"></div>
</body></html>
